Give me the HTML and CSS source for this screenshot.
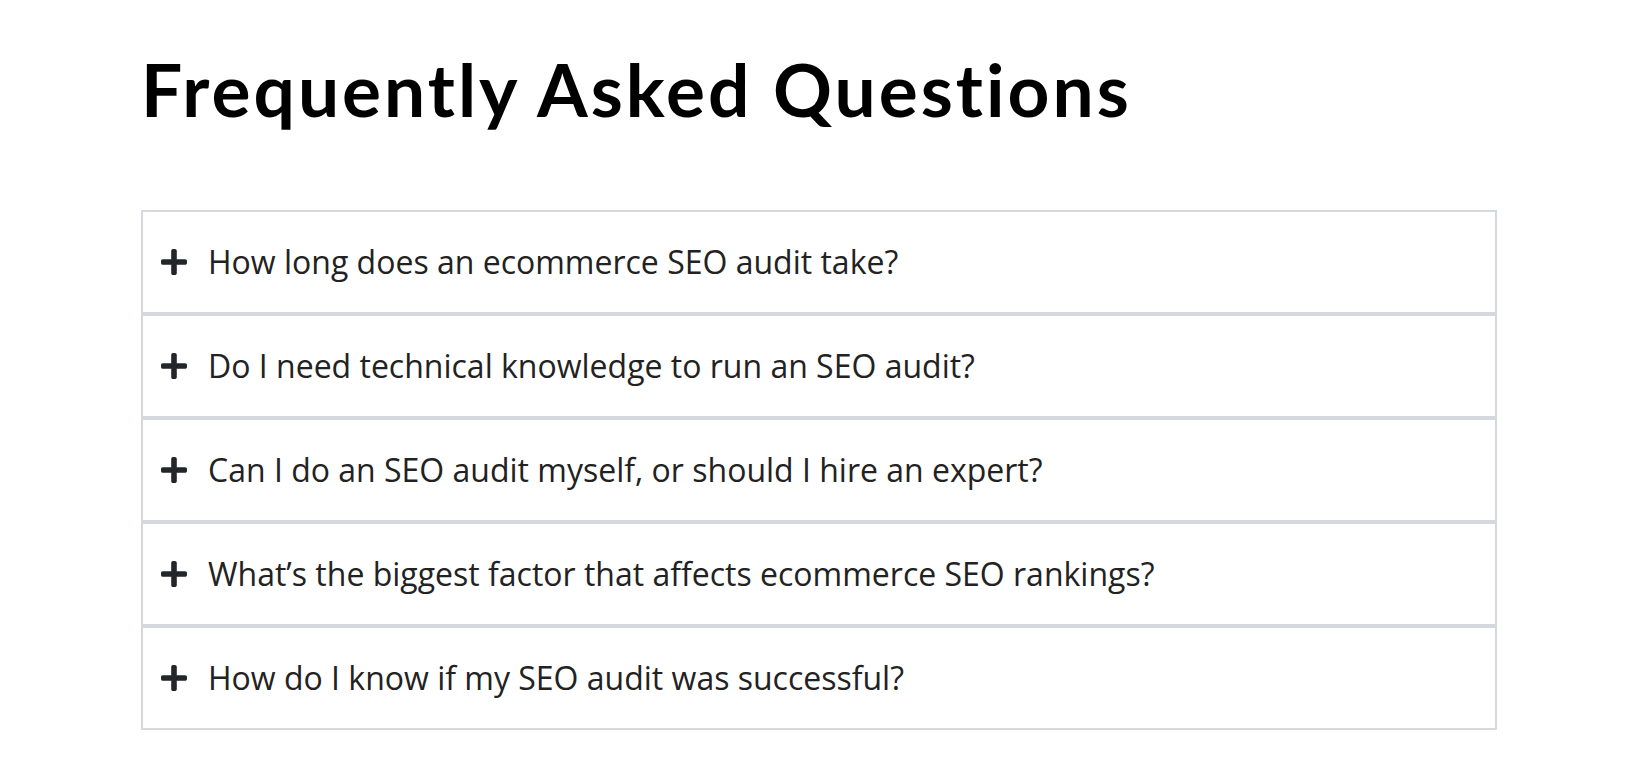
FILE: index.html
```html
<!DOCTYPE html>
<html lang="en">
<head>
<meta charset="utf-8">
<title>FAQ</title>
<link rel="stylesheet" href="styles.css">
</head>
<body>
<main class="faq">
  <h1 class="faq-title">Frequently Asked Questions</h1>
  <div class="accordion">
    <div class="item">
      <svg class="plus" viewBox="0 32 448 448" aria-hidden="true"><path d="M416 208H272V64c0-17.670-14.33-32-32-32h-32c-17.67 0-32 14.33-32 32v144H32c-17.67 0-32 14.33-32 32v32c0 17.67 14.33 32 32 32h144v144c0 17.67 14.33 32 32 32h32c17.67 0 32-14.33 32-32V304h144c17.67 0 32-14.33 32-32v-32c0-17.67-14.33-32-32-32z"/></svg>
      <span class="q">How long does an ecommerce SEO audit take?</span>
    </div>
    <div class="item">
      <svg class="plus" viewBox="0 32 448 448" aria-hidden="true"><path d="M416 208H272V64c0-17.67-14.33-32-32-32h-32c-17.67 0-32 14.33-32 32v144H32c-17.67 0-32 14.33-32 32v32c0 17.67 14.33 32 32 32h144v144c0 17.67 14.33 32 32 32h32c17.67 0 32-14.33 32-32V304h144c17.67 0 32-14.33 32-32v-32c0-17.67-14.33-32-32-32z"/></svg>
      <span class="q">Do I need technical knowledge to run an SEO audit?</span>
    </div>
    <div class="item">
      <svg class="plus" viewBox="0 32 448 448" aria-hidden="true"><path d="M416 208H272V64c0-17.67-14.33-32-32-32h-32c-17.67 0-32 14.33-32 32v144H32c-17.67 0-32 14.33-32 32v32c0 17.67 14.33 32 32 32h144v144c0 17.67 14.33 32 32 32h32c17.67 0 32-14.33 32-32V304h144c17.67 0 32-14.33 32-32v-32c0-17.67-14.33-32-32-32z"/></svg>
      <span class="q">Can I do an SEO audit myself, or should I hire an expert?</span>
    </div>
    <div class="item">
      <svg class="plus" viewBox="0 32 448 448" aria-hidden="true"><path d="M416 208H272V64c0-17.67-14.33-32-32-32h-32c-17.67 0-32 14.33-32 32v144H32c-17.67 0-32 14.33-32 32v32c0 17.67 14.33 32 32 32h144v144c0 17.67 14.33 32 32 32h32c17.67 0 32-14.33 32-32V304h144c17.67 0 32-14.33 32-32v-32c0-17.67-14.33-32-32-32z"/></svg>
      <span class="q">What’s the biggest factor that affects ecommerce SEO rankings?</span>
    </div>
    <div class="item">
      <svg class="plus" viewBox="0 32 448 448" aria-hidden="true"><path d="M416 208H272V64c0-17.67-14.33-32-32-32h-32c-17.67 0-32 14.33-32 32v144H32c-17.67 0-32 14.33-32 32v32c0 17.67 14.33 32 32 32h144v144c0 17.67 14.33 32 32 32h32c17.67 0 32-14.33 32-32V304h144c17.67 0 32-14.33 32-32v-32c0-17.67-14.33-32-32-32z"/></svg>
      <span class="q">How do I know if my SEO audit was successful?</span>
    </div>
  </div>
</main>
</body>
</html>
```
FILE: styles.css
```css
html, body {
  margin: 0;
  padding: 0;
  background: #ffffff;
}

.faq {
  width: 1356px;
  margin-left: 141px;
  padding-top: 46px;
}

.faq-title {
  margin: 0 0 76px 0;
  font-family: "Lato", "Liberation Sans", sans-serif;
  font-weight: 700;
  font-size: 73px;
  line-height: 1.2;
  color: #000000;
  letter-spacing: 3px;
}

.accordion {
  border: 2px solid #d5d8dc;
}

.item {
  height: 100px;
  display: flex;
  align-items: center;
  padding-left: 18px;
  gap: 21px;
  font-family: "Open Sans", "Liberation Sans", sans-serif;
  font-size: 32px;
  color: #222222;
}

.item + .item {
  border-top: 4px solid #d5d8dc;
}

.plus {
  width: 26px;
  height: 26px;
  fill: #23252a;
  flex: none;
}

.q {
  line-height: normal;
}
```
